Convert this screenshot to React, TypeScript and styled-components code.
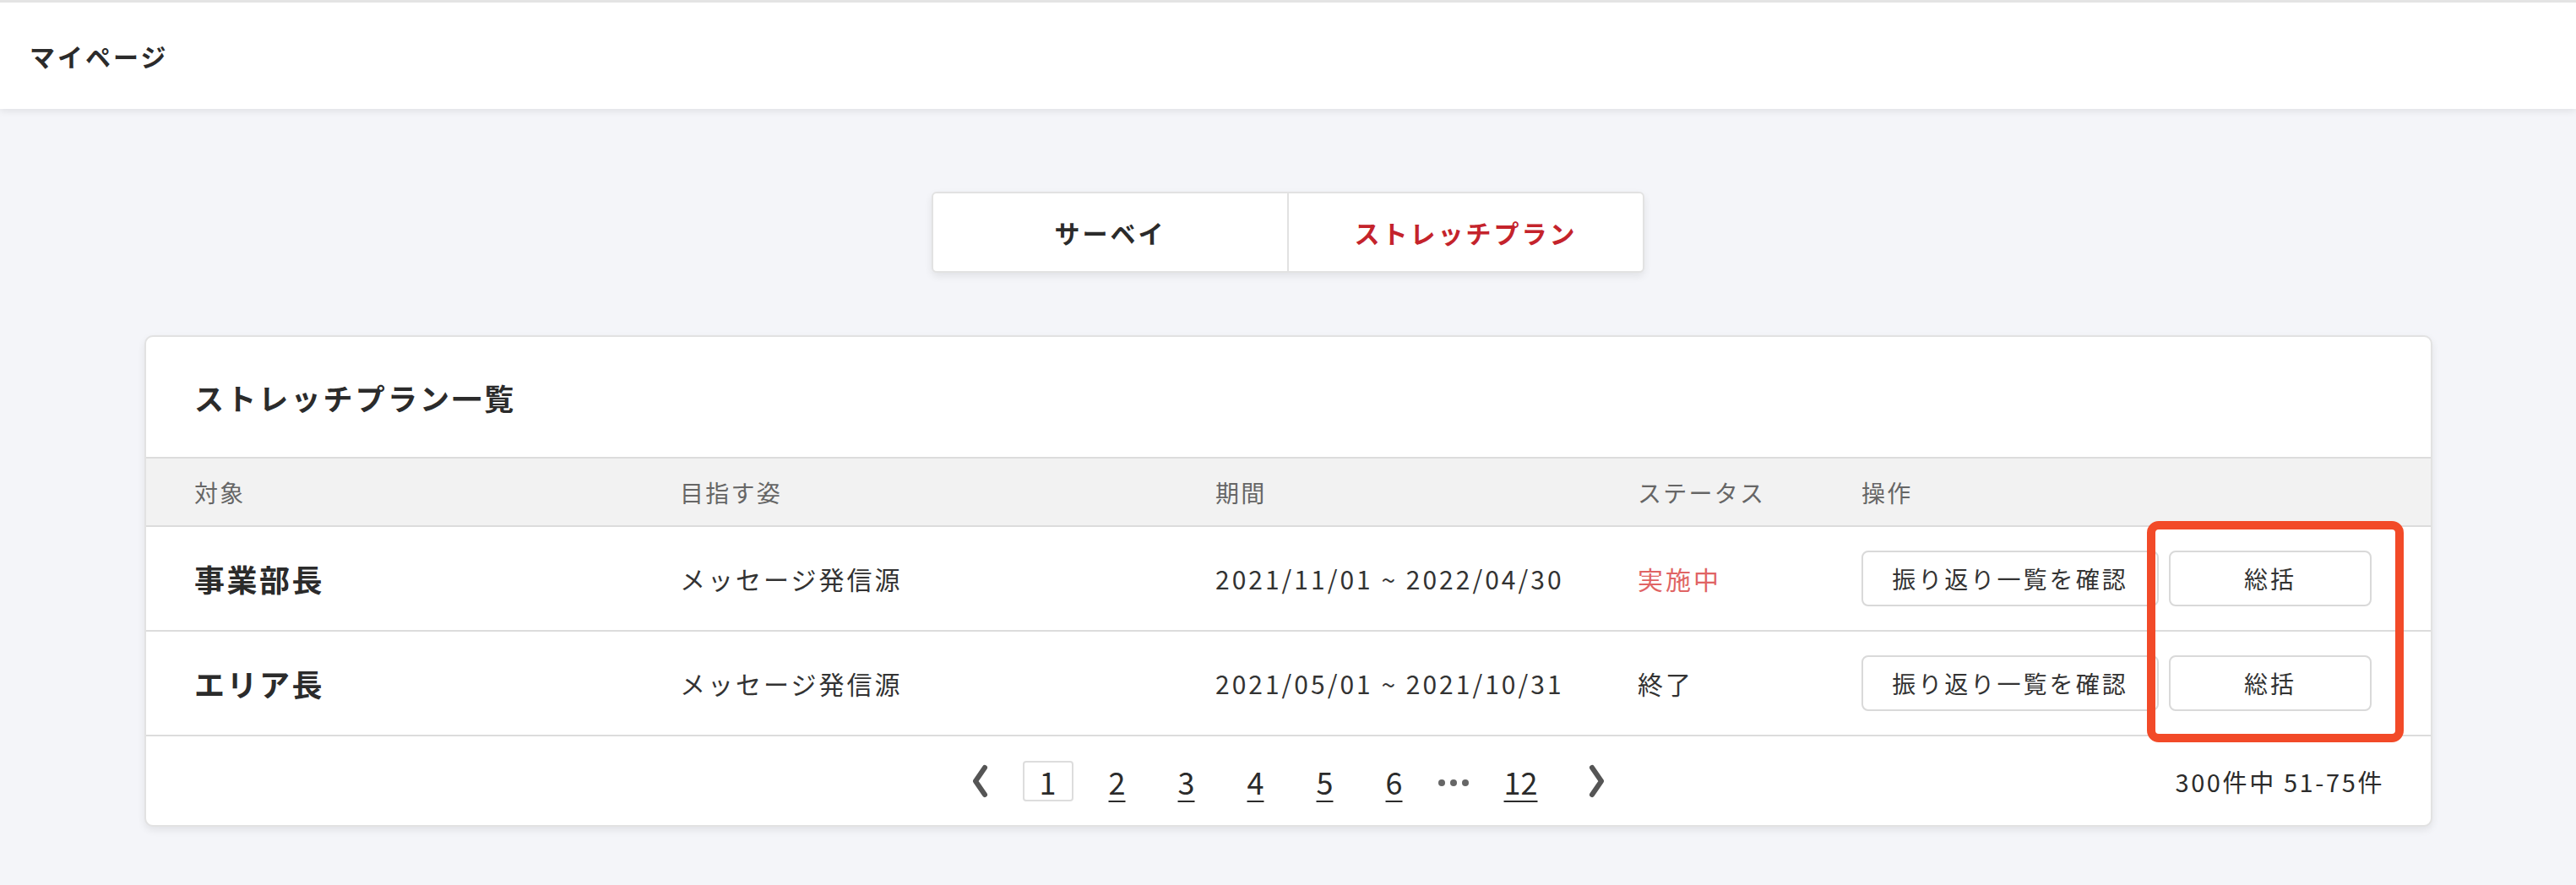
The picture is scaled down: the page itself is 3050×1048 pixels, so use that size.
import React from 'react';
import styled, { createGlobalStyle } from 'styled-components';

const GlobalStyle = createGlobalStyle`
  html, body {
    margin: 0;
    padding: 0;
    background-color: #f4f5f9;
    font-family: 'Noto Sans CJK JP', 'Noto Sans', sans-serif;
    color: #333333;
  }
`;

const Header = styled.header`
  height: 126px;
  background-color: #ffffff;
  border-top: 3px solid #e4e4e4;
  box-shadow: 0 3px 8px rgba(0, 0, 0, 0.08);
  display: flex;
  align-items: center;
  padding-left: 35px;
  font-size: 30px;
  font-weight: 700;
  letter-spacing: 0.1em;
  color: #2b2b2b;
`;

const Main = styled.main`
  display: flex;
  flex-direction: column;
  align-items: center;
  padding-top: 98px;
  padding-bottom: 60px;
`;

const Tabs = styled.div`
  display: flex;
  width: 840px;
  background-color: #ffffff;
  border: 2px solid #e2e2e2;
  border-radius: 6px;
  box-shadow: 0 4px 10px rgba(0, 0, 0, 0.08);
  overflow: hidden;
`;

const Tab = styled.div<{ $active?: boolean }>`
  flex: 1;
  height: 92px;
  display: flex;
  align-items: center;
  justify-content: center;
  font-size: 30px;
  font-weight: 700;
  letter-spacing: 0.1em;
  color: ${(p) => (p.$active ? '#c4232b' : '#2b2b2b')};
  & + & {
    border-left: 2px solid #e2e2e2;
  }
`;

const Card = styled.section`
  position: relative;
  align-self: stretch;
  margin: 74px 170px 0 171px;
  background-color: #ffffff;
  border: 2px solid #e2e2e2;
  border-radius: 10px;
  box-shadow: 0 4px 10px rgba(0, 0, 0, 0.08);
`;

const CardTitle = styled.h2`
  margin: 0;
  height: 142px;
  display: flex;
  align-items: center;
  padding-left: 57px;
  font-size: 35px;
  font-weight: 700;
  letter-spacing: 0.09em;
  color: #2b2b2b;
`;

const Row = styled.div<{ $head?: boolean }>`
  display: grid;
  grid-template-columns: 575px 634px 500px 265px 1fr;
  align-items: center;
  padding-left: 57px;
  height: ${(p) => (p.$head ? '79px' : '122px')};
  background-color: ${(p) => (p.$head ? '#f2f2f2' : '#ffffff')};
  border-top: ${(p) => (p.$head ? '2px solid #dcdcdc' : 'none')};
  border-bottom: 2px solid #dcdcdc;
`;

const HeadCell = styled.div`
  font-size: 28px;
  letter-spacing: 0.08em;
  color: #666666;
`;

const Target = styled.div`
  font-size: 36px;
  font-weight: 700;
  letter-spacing: 0.07em;
  color: #2b2b2b;
`;

const Cell = styled.div<{ $color?: string }>`
  font-size: 30px;
  letter-spacing: 0.1em;
  color: ${(p) => p.$color || '#333333'};
`;

const Actions = styled.div`
  display: flex;
  gap: 12px;
`;

const ActionButton = styled.button<{ $width: number }>`
  width: ${(p) => p.$width}px;
  height: 66px;
  background-color: #ffffff;
  border: 2px solid #d9d9d9;
  border-radius: 8px;
  font-family: inherit;
  font-size: 28px;
  letter-spacing: 0.11em;
  color: #333333;
  cursor: pointer;
`;

const Footer = styled.div`
  display: grid;
  grid-template-columns: 1fr auto 1fr;
  align-items: center;
  height: 105px;
`;

const Pager = styled.nav`
  grid-column: 2;
  display: flex;
  align-items: center;
  gap: 22px;
`;

const Arrow = styled.span<{ $side: 'left' | 'right' }>`
  display: flex;
  margin: ${(p) => (p.$side === 'left' ? '0 18px 0 0' : '0 0 0 18px')};
`;

const PageLink = styled.a<{ $current?: boolean }>`
  min-width: 60px;
  height: 48px;
  box-sizing: border-box;
  padding: 0 18px;
  display: flex;
  align-items: center;
  justify-content: center;
  font-size: 36px;
  color: #2b2b2b;
  text-decoration: ${(p) => (p.$current ? 'none' : 'underline')};
  text-decoration-thickness: 2px;
  text-underline-offset: 7px;
  border: 2px solid ${(p) => (p.$current ? '#dddddd' : 'transparent')};
  border-radius: 4px;
  cursor: pointer;
`;

const Dots = styled.span`
  display: flex;
  gap: 6px;
  padding-top: 4px;
`;

const Dot = styled.span`
  width: 8px;
  height: 8px;
  border-radius: 50%;
  background-color: #666666;
`;

const Count = styled.div`
  justify-self: end;
  padding-right: 55px;
  font-size: 29px;
  letter-spacing: 0.09em;
  color: #2b2b2b;
`;

const Highlight = styled.div`
  position: absolute;
  top: 218px;
  right: 32px;
  width: 304px;
  height: 262px;
  box-sizing: border-box;
  border: 10px solid #f24a28;
  border-radius: 14px;
  pointer-events: none;
`;

const Chevron: React.FC<{ dir: 'left' | 'right' }> = ({ dir }) => (
  <svg width='22' height='40' viewBox='0 0 22 40' fill='none'>
    <path
      d={dir === 'left' ? 'M17 4 L6 20 L17 36' : 'M5 4 L16 20 L5 36'}
      stroke='#555555'
      strokeWidth='6'
      strokeLinecap='round'
      strokeLinejoin='round'
    />
  </svg>
);

const plans = [
  {
    target: '事業部長',
    goal: 'メッセージ発信源',
    period: '2021/11/01 ~ 2022/04/30',
    status: '実施中',
    statusColor: '#e06464',
  },
  {
    target: 'エリア長',
    goal: 'メッセージ発信源',
    period: '2021/05/01 ~ 2021/10/31',
    status: '終了',
    statusColor: '#333333',
  },
];

const pages = ['2', '3', '4', '5', '6'];

export default function App() {
  return (
    <>
      <GlobalStyle />
      <Header>マイページ</Header>
      <Main>
        <Tabs>
          <Tab>サーベイ</Tab>
          <Tab $active>ストレッチプラン</Tab>
        </Tabs>
        <Card>
          <CardTitle>ストレッチプラン一覧</CardTitle>
          <Row $head>
            <HeadCell>対象</HeadCell>
            <HeadCell>目指す姿</HeadCell>
            <HeadCell>期間</HeadCell>
            <HeadCell>ステータス</HeadCell>
            <HeadCell>操作</HeadCell>
          </Row>
          {plans.map((plan) => (
            <Row key={plan.target}>
              <Target>{plan.target}</Target>
              <Cell>{plan.goal}</Cell>
              <Cell>{plan.period}</Cell>
              <Cell $color={plan.statusColor}>{plan.status}</Cell>
              <Actions>
                <ActionButton $width={352}>振り返り一覧を確認</ActionButton>
                <ActionButton $width={240}>総括</ActionButton>
              </Actions>
            </Row>
          ))}
          <Footer>
            <Pager>
              <Arrow $side='left'>
                <Chevron dir='left' />
              </Arrow>
              <PageLink $current>1</PageLink>
              {pages.map((p) => (
                <PageLink key={p}>{p}</PageLink>
              ))}
              <Dots>
                <Dot />
                <Dot />
                <Dot />
              </Dots>
              <PageLink>12</PageLink>
              <Arrow $side='right'>
                <Chevron dir='right' />
              </Arrow>
            </Pager>
            <Count>300件中 51-75件</Count>
          </Footer>
          <Highlight />
        </Card>
      </Main>
    </>
  );
}
